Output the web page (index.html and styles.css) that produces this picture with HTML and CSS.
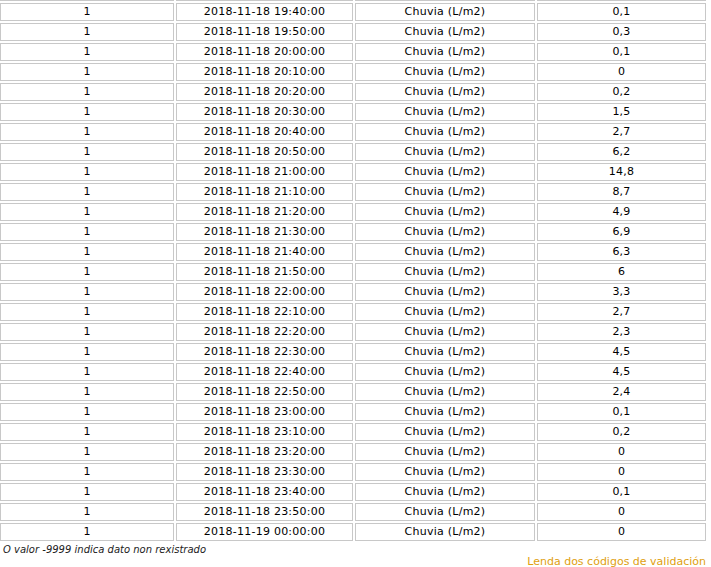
FILE: index.html
```html
<!DOCTYPE html>
<html>
<head>
<meta charset="utf-8">
<link rel="stylesheet" href="styles.css">
</head>
<body>
<div class="top-rule"><span></span><span></span><span></span><span></span></div>
<table class="data">
<colgroup><col class="c1"><col class="c2"><col class="c3"><col class="c4"></colgroup>
<tbody>
<tr><td>1</td><td>2018-11-18 19:40:00</td><td>Chuvia (L/m2)</td><td>0,1</td></tr>
<tr><td>1</td><td>2018-11-18 19:50:00</td><td>Chuvia (L/m2)</td><td>0,3</td></tr>
<tr><td>1</td><td>2018-11-18 20:00:00</td><td>Chuvia (L/m2)</td><td>0,1</td></tr>
<tr><td>1</td><td>2018-11-18 20:10:00</td><td>Chuvia (L/m2)</td><td>0</td></tr>
<tr><td>1</td><td>2018-11-18 20:20:00</td><td>Chuvia (L/m2)</td><td>0,2</td></tr>
<tr><td>1</td><td>2018-11-18 20:30:00</td><td>Chuvia (L/m2)</td><td>1,5</td></tr>
<tr><td>1</td><td>2018-11-18 20:40:00</td><td>Chuvia (L/m2)</td><td>2,7</td></tr>
<tr><td>1</td><td>2018-11-18 20:50:00</td><td>Chuvia (L/m2)</td><td>6,2</td></tr>
<tr><td>1</td><td>2018-11-18 21:00:00</td><td>Chuvia (L/m2)</td><td>14,8</td></tr>
<tr><td>1</td><td>2018-11-18 21:10:00</td><td>Chuvia (L/m2)</td><td>8,7</td></tr>
<tr><td>1</td><td>2018-11-18 21:20:00</td><td>Chuvia (L/m2)</td><td>4,9</td></tr>
<tr><td>1</td><td>2018-11-18 21:30:00</td><td>Chuvia (L/m2)</td><td>6,9</td></tr>
<tr><td>1</td><td>2018-11-18 21:40:00</td><td>Chuvia (L/m2)</td><td>6,3</td></tr>
<tr><td>1</td><td>2018-11-18 21:50:00</td><td>Chuvia (L/m2)</td><td>6</td></tr>
<tr><td>1</td><td>2018-11-18 22:00:00</td><td>Chuvia (L/m2)</td><td>3,3</td></tr>
<tr><td>1</td><td>2018-11-18 22:10:00</td><td>Chuvia (L/m2)</td><td>2,7</td></tr>
<tr><td>1</td><td>2018-11-18 22:20:00</td><td>Chuvia (L/m2)</td><td>2,3</td></tr>
<tr><td>1</td><td>2018-11-18 22:30:00</td><td>Chuvia (L/m2)</td><td>4,5</td></tr>
<tr><td>1</td><td>2018-11-18 22:40:00</td><td>Chuvia (L/m2)</td><td>4,5</td></tr>
<tr><td>1</td><td>2018-11-18 22:50:00</td><td>Chuvia (L/m2)</td><td>2,4</td></tr>
<tr><td>1</td><td>2018-11-18 23:00:00</td><td>Chuvia (L/m2)</td><td>0,1</td></tr>
<tr><td>1</td><td>2018-11-18 23:10:00</td><td>Chuvia (L/m2)</td><td>0,2</td></tr>
<tr><td>1</td><td>2018-11-18 23:20:00</td><td>Chuvia (L/m2)</td><td>0</td></tr>
<tr><td>1</td><td>2018-11-18 23:30:00</td><td>Chuvia (L/m2)</td><td>0</td></tr>
<tr><td>1</td><td>2018-11-18 23:40:00</td><td>Chuvia (L/m2)</td><td>0,1</td></tr>
<tr><td>1</td><td>2018-11-18 23:50:00</td><td>Chuvia (L/m2)</td><td>0</td></tr>
<tr><td>1</td><td>2018-11-19 00:00:00</td><td>Chuvia (L/m2)</td><td>0</td></tr>
</tbody>
</table>
<p class="note">O valor -9999 indica dato non rexistrado</p>
<div class="legend"><a class="legend-link" href="#">Lenda dos códigos de validación</a></div>
</body>
</html>
```

FILE: styles.css
```css
html, body {
  margin: 0;
  padding: 0;
  background: #fff;
  overflow: hidden;
}
body {
  font-family: "DejaVu Sans", Verdana, sans-serif;
  font-size: 11px;
  color: #000;
}
.top-rule {
  display: flex;
  gap: 2px;
  height: 1px;
  width: 706px;
}
.top-rule span {
  height: 1px;
  background: #c8c8c8;
}
.top-rule span:nth-child(1) { width: 174px; }
.top-rule span:nth-child(2) { width: 177px; }
.top-rule span:nth-child(3) { width: 180px; }
.top-rule span:nth-child(4) { width: 169px; }
.data {
  border-collapse: separate;
  border-spacing: 2px;
  table-layout: fixed;
  width: 710px;
  margin: 0 0 0 -2px;
}
.c1 { width: 174px; }
.c2 { width: 177px; }
.c3 { width: 180px; }
.c4 { width: 169px; }
.data td {
  box-sizing: border-box;
  height: 18px;
  padding: 0;
  border: 1px solid #c8c8c8;
  text-align: center;
  vertical-align: middle;
  line-height: 16px;
  letter-spacing: 0.25px;
  white-space: nowrap;
}
.note {
  margin: 1px 0 0 3px;
  font-size: 10px;
  line-height: 12px;
  font-style: italic;
  color: #222;
}
.legend {
  display: flex;
  justify-content: flex-end;
  padding-right: 5px;
}
.legend-link {
  color: #e0a010;
  text-decoration: none;
  font-size: 11px;
  line-height: 12px;
}
```
